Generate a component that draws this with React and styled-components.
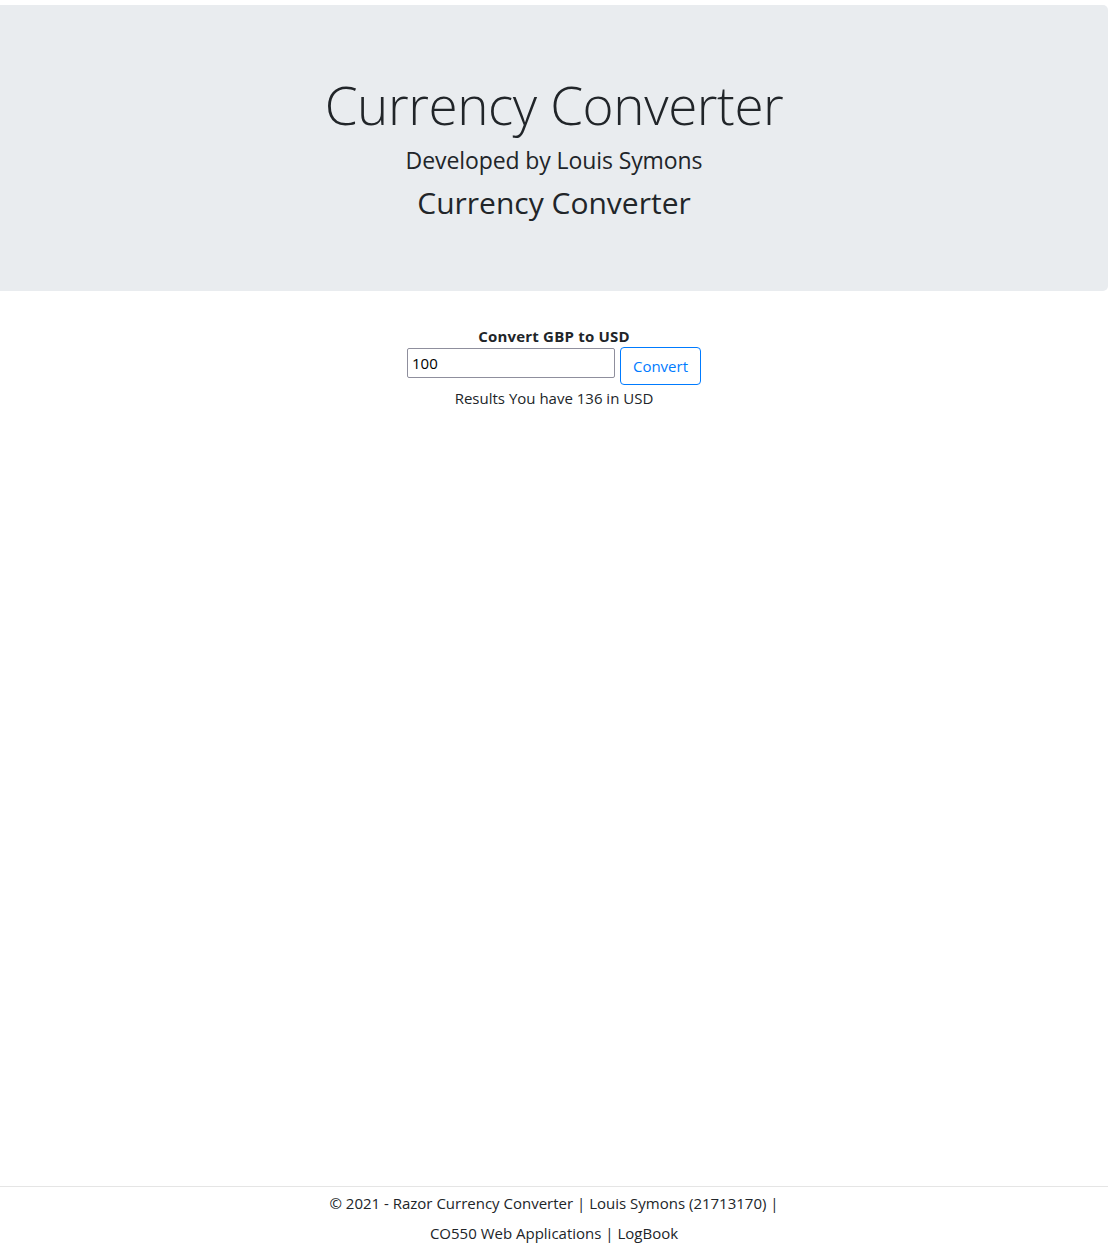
import React from "react";
import styled, { createGlobalStyle } from "styled-components";

const Global = createGlobalStyle`
  html, body { margin: 0; padding: 0; }
  body {
    font-family: "Open Sans", "Noto Sans", sans-serif;
    color: #212529;
    background: #fff;
    font-size: 15px;
  }
  * { box-sizing: border-box; }
`;

const Page = styled.div`
  min-height: 1247px;
  display: flex;
  flex-direction: column;
`;

const Jumbotron = styled.header`
  margin-top: 5px;
  background: #e9ecef;
  border-radius: 0 5px 5px 0;
  height: 286px;
  display: flex;
  flex-direction: column;
  align-items: center;
  padding-top: 69px;
`;

const Title = styled.h1`
  margin: 0;
  font-weight: 300;
  font-size: 53px;
  line-height: 62px;
  letter-spacing: -0.4px;
`;

const Sub = styled.h4`
  margin: 9px 0 0;
  font-weight: 400;
  font-size: 23px;
  line-height: 30px;
  letter-spacing: -0.1px;
`;

const Sub2 = styled.h3`
  margin: 10px 0 0;
  font-weight: 400;
  font-size: 30px;
  line-height: 36px;
  letter-spacing: 0px;
`;

const Main = styled.main`
  flex: 1;
  display: flex;
  flex-direction: column;
  align-items: center;
  padding-top: 35px;
`;

const Label = styled.div`
  font-weight: 700;
  font-size: 15px;
  line-height: 20px;
  letter-spacing: 0.2px;
`;

const Row = styled.form`
  display: flex;
  align-items: flex-start;
  gap: 5px;
  margin-top: 1px;
`;

const Input = styled.input`
  width: 208px;
  height: 30px;
  margin-top: 1px;
  border: 1px solid #8f8f9d;
  border-radius: 2px;
  font-family: "Open Sans", sans-serif;
  font-size: 15px;
  padding: 0 4px;
  color: #000;
`;

const Button = styled.button`
  height: 38px;
  width: 81px;
  padding: 0;
  border: 1px solid #007bff;
  border-radius: 4px;
  background: #fff;
  color: #007bff;
  font-family: "Open Sans", sans-serif;
  font-size: 15px;
`;

const Result = styled.div`
  margin-top: 1px;
  font-size: 15px;
  line-height: 24px;
`;

const Footer = styled.footer`
  border-top: 1px solid #e5e5e5;
  text-align: center;
  font-size: 15px;
  line-height: 30px;
  padding-top: 1px;
  height: 61px;
  color: #212529;
`;

export default function App() {
  return (
    <>
      <Global />
      <Page>
        <Jumbotron>
          <Title>Currency Converter</Title>
          <Sub>Developed by Louis Symons</Sub>
          <Sub2>Currency Converter</Sub2>
        </Jumbotron>
        <Main>
          <Label>Convert GBP to USD</Label>
          <Row onSubmit={(e) => e.preventDefault()}>
            <Input defaultValue="100" />
            <Button type="submit">Convert</Button>
          </Row>
          <Result>Results You have 136 in USD</Result>
        </Main>
        <Footer>
          © 2021 - Razor Currency Converter | Louis Symons (21713170) |
          <br />
          CO550 Web Applications | LogBook
        </Footer>
      </Page>
    </>
  );
}
